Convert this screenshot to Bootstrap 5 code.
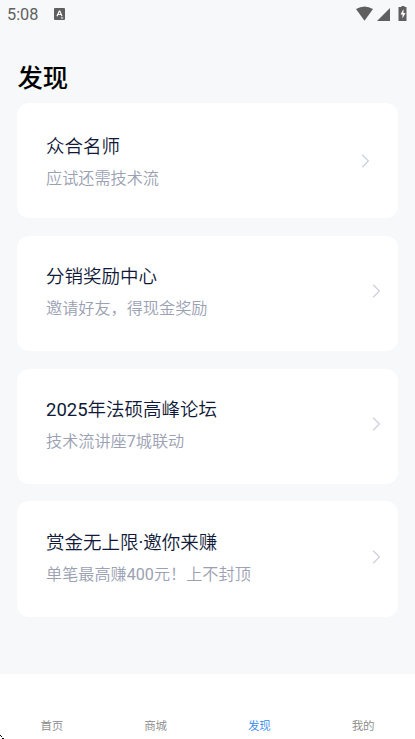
<!DOCTYPE html>
<html lang="zh-CN">
<head>
<meta charset="utf-8">
<meta name="viewport" content="width=device-width, initial-scale=1">
<title>发现</title>
<link href="https://cdn.jsdelivr.net/npm/bootstrap@5.3.0/dist/css/bootstrap.min.css" rel="stylesheet">
<style>
body{font-family:Roboto,"Noto Sans CJK SC",sans-serif;background:#f7f8fa;height:739px;overflow:hidden}
.status{height:28px;padding:0 8px 0 7px;color:#5f5f60;font-size:16.3px;line-height:29px}
.page-title{font-size:25.3px;line-height:38px;font-weight:500;color:#000;margin:32px 0 5px 17.5px;height:38px}
.tiles{padding:0 17px;gap:17.4px}
.tile{font-weight:350;height:115.4px;border-radius:12px;border:0;padding:0 17px 4px 29px;background:#fff}
.tile-inset{padding-right:28.5px;padding-bottom:0}
.tile-name{font-size:18.5px;line-height:28px;color:#101938;margin-top:2px}
.tile-note{font-size:16.15px;line-height:24px;color:#9ba1b3;margin-top:6px}
.tabs{font-weight:350;height:65px;background:#fff;font-size:11.5px;line-height:17px;padding-bottom:4px}
.tabs a{color:#8a8a8a}
.tabs a.active{color:#2c86f0}
.corner{left:0;bottom:0}
</style>
<script src="https://cdn.jsdelivr.net/npm/bootstrap@5.3.0/dist/js/bootstrap.bundle.min.js"></script>
</head>
<body class="d-flex flex-column position-relative">
<header class="status d-flex flex-shrink-0">
  <span>5:08</span>
  <svg width="11" height="12" viewBox="0 0 11 12" class="ms-3 mt-2"><rect width="11" height="12" rx="1" fill="#5f5f60"/><path d="M3 8.2 5.3 3h.5L8 8.2M3.8 6.500h3.400M6.800 10h2.400" fill="none" stroke="#fff" stroke-width="1.2"/></svg>
  <svg width="52" height="18" viewBox="0 0 52 18" class="ms-auto mt-1" fill="#5f5f60"><path d="M1 5.100Q9.500-.2 18 5.100L9.500 16.700Z"/><path d="M35 4v13H22Z"/><path d="M44.500 3h2V2h3v1h2v14h-8V3Z"/><path d="m48.500 5-3 5.500h2v4l3-5.500h-2Z" fill="#fff"/></svg>
</header>
<h1 class="page-title flex-shrink-0">发现</h1>
<main class="tiles d-flex flex-column">
  <a class="tile tile-inset flex-shrink-0 d-flex align-items-center justify-content-between text-decoration-none" href="#">
    <div><div class="tile-name">众合名师</div><div class="tile-note">应试还需技术流</div></div>
    <svg width="9" height="14" viewBox="0 0 9 14" fill="none" stroke="#ced1dc" stroke-width="1.3"><path d="m1.200.8 6.200 6.200-6.200 6.200"/></svg>
  </a>
  <a class="tile flex-shrink-0 d-flex align-items-center justify-content-between text-decoration-none" href="#">
    <div><div class="tile-name">分销奖励中心</div><div class="tile-note">邀请好友，得现金奖励</div></div>
    <svg width="9" height="14" viewBox="0 0 9 14" fill="none" stroke="#ced1dc" stroke-width="1.3"><path d="m1.200.8 6.200 6.200-6.200 6.200"/></svg>
  </a>
  <a class="tile flex-shrink-0 d-flex align-items-center justify-content-between text-decoration-none" href="#">
    <div><div class="tile-name"><span class="fw-normal">2025</span>年法硕高峰论坛</div><div class="tile-note">技术流讲座<span class="fw-normal">7</span>城联动</div></div>
    <svg width="9" height="14" viewBox="0 0 9 14" fill="none" stroke="#ced1dc" stroke-width="1.3"><path d="m1.200.8 6.200 6.200-6.200 6.200"/></svg>
  </a>
  <a class="tile flex-shrink-0 d-flex align-items-center justify-content-between text-decoration-none" href="#">
    <div><div class="tile-name">赏金无上限<span class="fw-normal">·</span>邀你来赚</div><div class="tile-note">单笔最高赚<span class="fw-normal">400</span>元！上不封顶</div></div>
    <svg width="9" height="14" viewBox="0 0 9 14" fill="none" stroke="#ced1dc" stroke-width="1.3"><path d="m1.200.8 6.200 6.200-6.200 6.200"/></svg>
  </a>
</main>
<nav class="tabs mt-auto flex-shrink-0 d-flex align-items-end text-center">
  <a class="col-3 text-decoration-none" href="#">首页</a>
  <a class="col-3 text-decoration-none" href="#">商城</a>
  <a class="col-3 text-decoration-none active" href="#">发现</a>
  <a class="col-3 text-decoration-none" href="#">我的</a>
</nav>
<svg class="corner position-absolute" width="4" height="4" viewBox="0 0 4 4"><path d="M0 0h1v1h1v1h-1v-1h-1ZM2 3h2v1h-2Z" fill="#000"/></svg>
</body>
</html>
